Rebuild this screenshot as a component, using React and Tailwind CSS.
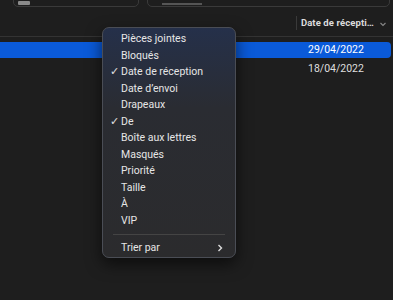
import React from "react";

const items = [
  { t: "Pièces jointes" },
  { t: "Bloqués" },
  { t: "Date de réception", c: true },
  { t: "Date d’envoi" },
  { t: "Drapeaux" },
  { t: "De", c: true },
  { t: "Boîte aux lettres" },
  { t: "Masqués" },
  { t: "Priorité" },
  { t: "Taille" },
  { t: "À" },
  { t: "VIP" },
];

export default function App() {
  return (
    <div
      className="relative w-[393px] h-[300px] overflow-hidden bg-[#1e1e1e] text-[#e6e6e6]"
      style={{ fontFamily: "Roboto, 'Noto Sans', sans-serif" }}
    >
      {/* toolbar */}
      <div className="flex h-[7px] gap-[8px] px-[13px] items-end">
        <div className="w-[126px] h-[14px] -mt-[7px] rounded-b-[5px] border border-[#3a3a3a] flex items-end pl-[4px] pb-[1px]">
          <div className="w-[12px] h-[4px] bg-[#8a8a8a] rounded-[1px]" />
        </div>
        <div className="flex-1 h-[14px] -mt-[7px] rounded-b-[5px] border border-[#3a3a3a] -mr-[10px] flex items-end pl-[14px] pb-[1px]">
          <div className="w-[40px] h-[2px] bg-[#555]" />
        </div>
      </div>
      {/* header */}
      <div className="h-[30px] flex items-end justify-end border-b border-[#333] pb-[6px] pr-[6px]">
        <div className="h-[14px] w-px bg-[#3a3a3a] mr-[4px]" />
        <span className="text-[9.5px] font-bold text-[#dcdcdc] leading-[14px] tracking-[0.1px]">Date de récepti…</span>
        <svg width="8" height="8" viewBox="0 0 8 8" className="ml-[5px] mb-[2px]">
          <path d="M1.5 3 L4 5.5 L6.5 3" stroke="#888" strokeWidth="1.1" fill="none" />
        </svg>
      </div>
      {/* rows */}
      <div className="pt-[5px]">
        <div className="h-[16px] w-[391px] bg-[#0a5ad9] rounded-r-[4px] flex items-center pl-[308px] text-[10.5px] text-white">
          29/04/2022
        </div>
        <div className="h-[21px] flex items-center pl-[308px] text-[10.5px] text-[#dedede]">18/04/2022</div>
      </div>

      {/* menu */}
      <div className="absolute left-[102px] top-[27px] w-[134px] h-[231px] rounded-[7px] border border-[#4a4d55] bg-gradient-to-b from-[#25304a] via-[#2a2c32] via-[35%] to-[#2b2b2d] shadow-[0_6px_16px_rgba(0,0,0,0.6)] pt-[3px] px-[5px] text-[10.5px]">
        {items.map((it) => (
          <div key={it.t} className="h-[16.5px] flex items-center leading-none">
            <span className="inline-block shrink-0 w-[13px] pl-[2px] text-[10.5px] text-[#e0e0e0]">{it.c ? "✓" : ""}</span>
            <span>{it.t}</span>
          </div>
        ))}
        <div className="h-px bg-[#444] mx-[5px] my-[5px]" />
        <div className="h-[16.5px] flex items-center justify-between leading-none">
          <span className="pl-[13px]">Trier par</span>
          <svg width="8" height="10" viewBox="0 0 8 10" className="mr-[6px]">
            <path d="M2.5 2 L5.5 5 L2.5 8" stroke="#ddd" strokeWidth="1.4" fill="none" />
          </svg>
        </div>
      </div>
    </div>
  );
}
